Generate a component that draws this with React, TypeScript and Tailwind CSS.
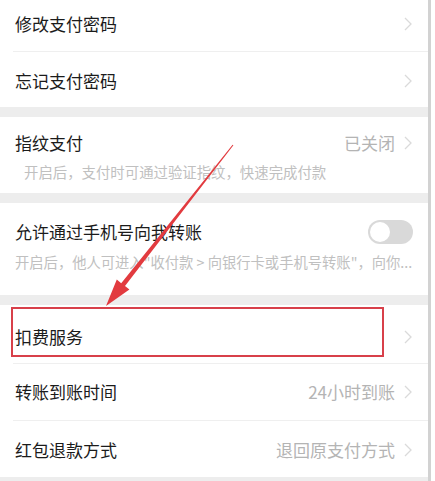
import React from 'react';

const font = { fontFamily: '"Noto Sans CJK SC", "Noto Sans", sans-serif' };

const Chevron = () => (
  <svg width="8" height="14" viewBox="0 0 8 14" className="ml-[9px] shrink-0">
    <path d="M1 1 L7 7 L1 13" fill="none" stroke="#dadada" strokeWidth="1.3" />
  </svg>
);

const Row: React.FC<{ label: string; value?: string; className?: string }> = ({ label, value, className }) => (
  <div className={`flex items-center justify-between pl-[15px] pr-[16px] ${className ?? ''}`}>
    <span className="text-[17px] text-[#1b1b1b]">{label}</span>
    <div className="flex items-center">
      {value && <span className="text-[17px] text-[#b4b4b4]">{value}</span>}
      <Chevron />
    </div>
  </div>
);

const Divider = () => <div className="ml-[13px] h-px bg-[#efefef]" />;
const Gap = () => <div className="h-[10px] bg-[#ededed]" />;

export default function App() {
  return (
    <div className="relative w-[435px] h-[481px] overflow-hidden bg-white flex" style={font}>
      <div className="w-[428px] flex flex-col">
        <Row label="修改支付密码" className="h-[51px] pb-[3px]" />
        <Divider />
        <Row label="忘记支付密码" className="h-[55px] pt-[2px]" />
        <Gap />

        {/* 指纹支付 */}
        <div className="h-[76px] flex flex-col pl-[15px] pr-[16px] pt-[14px]">
          <div className="flex items-center justify-between h-[24px]">
            <span className="text-[17px] text-[#1b1b1b]">指纹支付</span>
            <div className="flex items-center">
              <span className="text-[17px] text-[#b4b4b4]">已关闭</span>
              <Chevron />
            </div>
          </div>
          <div className="mt-[5px] pl-[9px] text-[14.4px] text-[#c0c0c0] leading-[24px]">
            开启后，支付时可通过验证指纹，快速完成付款
          </div>
        </div>
        <Gap />

        {/* 手机号转账 */}
        <div className="h-[92px] flex flex-col pl-[15px] pr-[10px] pt-[16px]">
          <div className="flex items-center justify-between h-[26px] pr-[5px]">
            <span className="text-[17px] text-[#1b1b1b]">允许通过手机号向我转账</span>
            <div className="w-[45px] h-[24px] rounded-full bg-[#d9d9d9] p-[2px] flex items-center">
              <div className="w-[20px] h-[20px] rounded-full bg-white" />
            </div>
          </div>
          <div className="mt-[5px] text-[14.3px] text-[#c0c0c0] leading-[24px] whitespace-nowrap">
            开启后，他人可进入"收付款 &gt; 向银行卡或手机号转账"，向你...
          </div>
        </div>
        <Gap />

        <Row label="扣费服务" className="h-[58px] pt-[6px]" />
        <Divider />
        <Row label="转账到账时间" value="24小时到账" className="h-[56px]" />
        <Divider />
        <Row label="红包退款方式" value="退回原支付方式" className="h-[56px] pt-[2px]" />
        <div className="flex-1 bg-[#ededed]" />
      </div>
      <div className="w-[3px] bg-[#d2d2d2]" />
      <div className="flex-1 bg-white" />

      {/* annotation box */}
      <div className="absolute left-[11px] top-[307px] w-[373px] h-[50px] border-2 border-[#d8404a]" />

      {/* annotation arrow */}
      <svg className="absolute left-0 top-0 pointer-events-none" width="435" height="481" viewBox="0 0 435 481">
        <polygon
          points="106,306 116.8,279.6 121.2,283.2 232.6,144.7 233.4,145.3 125,286 129.4,289.5"
          fill="#e23b3f"
        />
      </svg>
    </div>
  );
}
